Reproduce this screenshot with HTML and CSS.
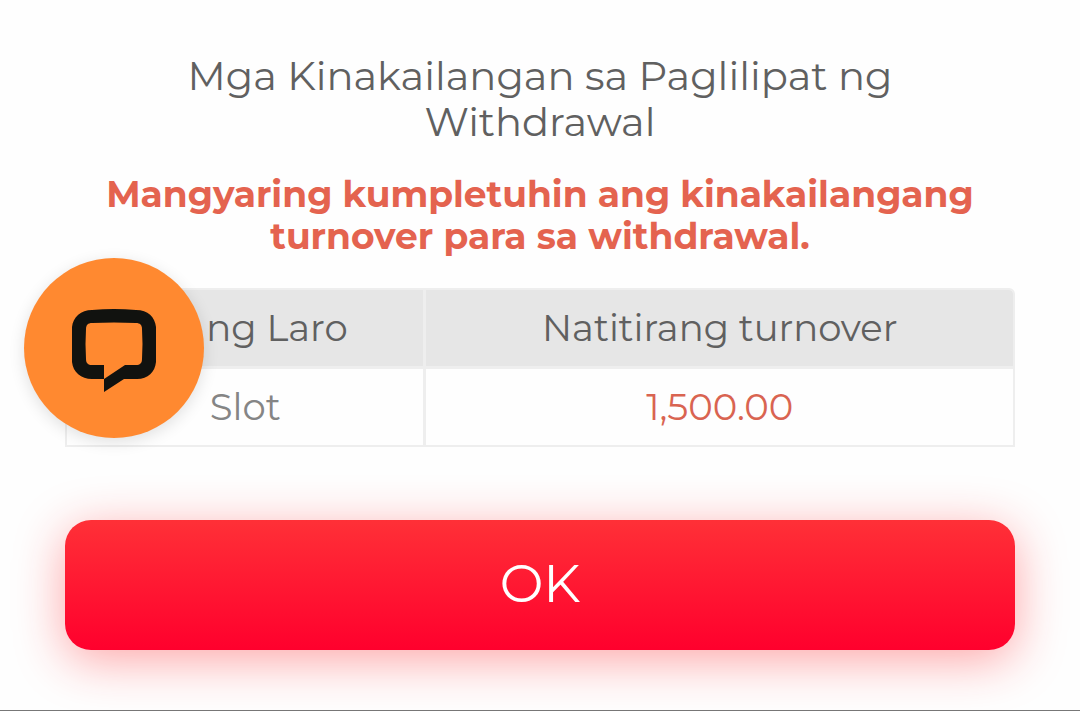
FILE: index.html
```html
<!DOCTYPE html>
<html lang="fil">
<head>
<meta charset="utf-8">
<meta name="viewport" content="width=device-width, initial-scale=1">
<title>Mga Kinakailangan sa Paglilipat ng Withdrawal</title>
<link rel="stylesheet" href="styles.css">
</head>
<body>
<main class="dialog">
  <h1 class="dialog-title">Mga Kinakailangan sa Paglilipat ng Withdrawal</h1>
  <p class="dialog-notice">Mangyaring kumpletuhin ang kinakailangang turnover para sa withdrawal.</p>
  <table class="turnover">
    <thead>
      <tr><th class="game-col" scope="col">Uri ng Laro</th><th scope="col">Natitirang turnover</th></tr>
    </thead>
    <tbody>
      <tr><td>Slot</td><td class="amount">1,500.00</td></tr>
    </tbody>
  </table>
  <button class="ok-button" type="button">OK</button>
</main>
<button class="chat-button" type="button" aria-label="Chat">
  <svg class="chat-icon" viewBox="0 0 84 84" aria-hidden="true">
    <path fill="#11120f" fill-rule="evenodd" d="M20 2Q42 0 64 2C76 2 83 9 84 19Q84 36 84 54C83 64 76 71 65 71H52L32 84V71H20C9 71 1 64 0 54Q0 36 0 19C1 9 9 2 20 2ZM20 15C16 15 14 17 14 21Q13 36 14 51C14 55 16 57 20 57H32V71L53 57H64C68 57 70 55 70 51Q71 36 70 21C70 17 68 15 64 15Q42 14 20 15Z"/>
  </svg>
</button>
</body>
</html>
```

FILE: styles.css
```css
* {
  box-sizing: border-box;
}

body {
  margin: 0;
  background: #fefefe;
  color: #606060;
  font-family: Montserrat, Inter, "Open Sans", sans-serif;
  font-weight: 400;
}

.dialog {
  display: flex;
  flex-direction: column;
  padding: 53px 65px 60px;
  border-bottom: 1px solid #777;
  text-align: center;
}

.dialog-title {
  margin: 0 0 28px;
  padding: 0 24px;
  font-size: 40px;
  font-weight: 400;
  line-height: 46px;
}

.dialog-notice {
  margin: 0 0 31px;
  padding: 0 24px;
  color: #e4634f;
  font-size: 36px;
  font-weight: 700;
  line-height: 42px;
}

.turnover {
  width: 100%;
  margin-bottom: 73px;
  table-layout: fixed;
  border: 2px solid #eee;
  border-spacing: 0;
  border-radius: 6px 6px 0 0;
  overflow: hidden;
  font-size: 37px;
  line-height: 44px;
}

.turnover th,
.turnover td {
  padding: 16px 8px;
  font-weight: 400;
}

.turnover th {
  background: #e6e6e6;
  border-bottom: 3px solid #eee;
}

.turnover th:first-child,
.turnover td:first-child {
  border-right: 3px solid #eee;
}

.turnover td {
  color: #858585;
}

.turnover .game-col {
  width: 38%;
}

.turnover .amount {
  color: #d96451;
}

.ok-button {
  height: 130px;
  padding: 0 0 4px;
  border: 0;
  border-radius: 26px;
  background: linear-gradient(#ff3037, #ff002d);
  box-shadow: 0 10px 50px rgba(255, 30, 35, 0.4);
  color: #fff;
  font: inherit;
  font-size: 52px;
}

.chat-button {
  position: absolute;
  top: 258px;
  left: 24px;
  display: grid;
  place-items: center;
  width: 180px;
  height: 180px;
  padding: 4px 0 0;
  border: 0;
  border-radius: 50%;
  background: #ff8930;
  box-shadow: 0 4px 16px rgba(0, 0, 0, 0.12);
}

.chat-icon {
  width: 84px;
  height: 84px;
}
```
